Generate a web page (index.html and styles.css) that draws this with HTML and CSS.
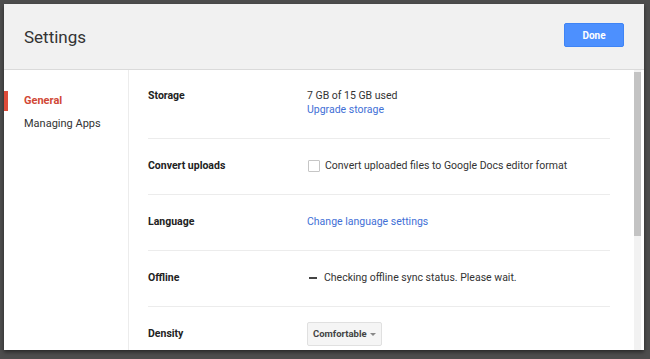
FILE: index.html
```html
<!DOCTYPE html>
<html lang="en">
<head>
  <meta charset="UTF-8" />
  <meta name="viewport" content="width=device-width, initial-scale=1.0" />
  <title>Settings</title>
  <link rel="stylesheet" href="styles.css">
</head>
<body>
  <div class="dialog">
    <header class="dialog-head">
      <h1>Settings</h1>
      <button class="done">Done</button>
    </header>

    <div class="dialog-body">
      <nav class="side">
        <a class="side-item active">General</a>
        <a class="side-item">Managing Apps</a>
      </nav>

      <main class="panel">
        <div class="row">
          <div class="row-label">Storage</div>
          <div class="row-value">
            <div>7 GB of 15 GB used</div>
            <a class="link">Upgrade storage</a>
          </div>
        </div>

        <div class="row">
          <div class="row-label">Convert uploads</div>
          <div class="row-value inline">
            <span class="checkbox"></span>
            <span>Convert uploaded files to Google Docs editor format</span>
          </div>
        </div>

        <div class="row">
          <div class="row-label">Language</div>
          <div class="row-value">
            <a class="link">Change language settings</a>
          </div>
        </div>

        <div class="row">
          <div class="row-label">Offline</div>
          <div class="row-value inline">
            <span class="dash"></span>
            <span>Checking offline sync status. Please wait.</span>
          </div>
        </div>

        <div class="row">
          <div class="row-label">Density</div>
          <div class="row-value">
            <span class="dropdown">Comfortable <span class="caret"></span></span>
          </div>
        </div>
      </main>

      <div class="scrollbar"><div class="thumb"></div></div>
    </div>
  </div>
</body>
</html>
```

FILE: styles.css
```css
html, body {
  height: 100%;
}

body {
  margin: 0;
  padding: 4px 6px 0 4px;
  box-sizing: border-box;
  background-color: #4d4d4d;
  font-family: Roboto, Arial, sans-serif;
  color: #333;
  overflow: hidden;
}

.dialog {
  height: 346px;
  background-color: #fff;
  display: flex;
  flex-direction: column;
  box-shadow: 0 2px 4px rgba(0, 0, 0, 0.5);
}

.dialog-head {
  height: 65px;
  flex-shrink: 0;
  display: flex;
  align-items: center;
  justify-content: space-between;
  padding: 0 20px;
  background-color: #f1f1f1;
  border-bottom: 1px solid #dadada;
}

.dialog-head h1 {
  margin: 0;
  font-size: 17px;
  font-weight: normal;
  color: #333;
}

.done {
  width: 60px;
  height: 24px;
  margin-top: -3px;
  background-color: #4d90fe;
  border: 1px solid #3f84f5;
  border-radius: 2px;
  color: #fff;
  font-family: Roboto, Arial, sans-serif;
  font-size: 10px;
  font-weight: bold;
  padding: 0;
}

.dialog-body {
  flex: 1;
  display: flex;
  overflow: hidden;
}

.side {
  width: 124px;
  flex-shrink: 0;
  border-right: 1px solid #ececec;
  padding-top: 21px;
}

.side-item {
  display: block;
  height: 20px;
  line-height: 20px;
  margin-bottom: 3px;
  padding-left: 16px;
  border-left: 4px solid transparent;
  font-size: 11px;
  color: #333;
}

.side-item.active {
  border-left-color: #dd4b39;
  color: #d14836;
  font-weight: bold;
}

.panel {
  flex: 1;
  padding: 0 24px 0 19px;
  font-size: 10.5px;
  line-height: 14px;
}

.row {
  display: flex;
  align-items: flex-start;
  padding: 20px 0 21px;
  border-bottom: 1px solid #ececec;
}

.row:first-child {
  padding-top: 19px;
}

.row:last-child {
  border-bottom: none;
  align-items: center;
}

.row-label {
  width: 159px;
  flex-shrink: 0;
  font-weight: bold;
  color: #222;
}

.row-value {
  color: #333;
}

.row-value.inline {
  display: flex;
  align-items: center;
}

.link {
  color: #3f6fd6;
  text-decoration: none;
}

.checkbox {
  width: 10px;
  height: 10px;
  margin: 0 5px 0 1px;
  border: 1px solid #c6c6c6;
  border-radius: 1px;
}

.dash {
  width: 8px;
  height: 2px;
  margin: 0 7px 0 2px;
  background-color: #444;
}

.dropdown {
  display: inline-flex;
  align-items: center;
  height: 22px;
  margin: -5px 0;
  padding: 0 5px;
  background-color: #f5f5f5;
  border: 1px solid #e0e0e0;
  border-radius: 2px;
  font-size: 9.5px;
  font-weight: bold;
  color: #444;
}

.caret {
  margin-left: 3px;
  border-left: 3px solid transparent;
  border-right: 3px solid transparent;
  border-top: 3px solid #888;
}

.scrollbar {
  width: 7px;
  flex-shrink: 0;
  margin-right: 3px;
  background-color: #f2f2f2;
  padding-top: 2px;
}

.thumb {
  height: 164px;
  background-color: #c3c3c3;
}
```
